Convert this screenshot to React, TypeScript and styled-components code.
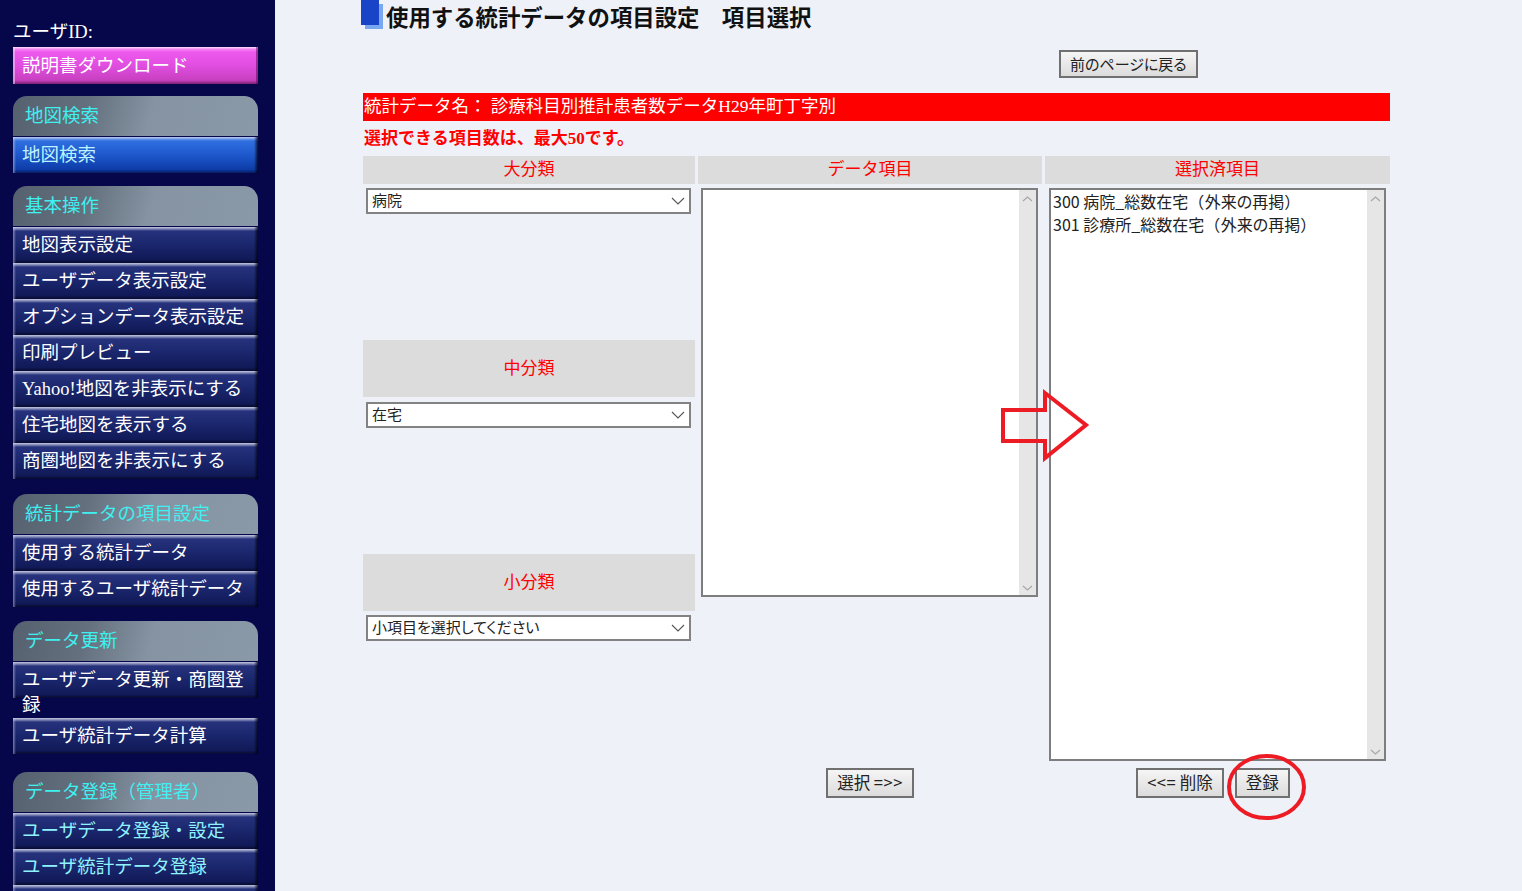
import styled, { createGlobalStyle } from "styled-components";

const GlobalStyle = createGlobalStyle`
  html, body {
    margin: 0;
    padding: 0;
  }
  body {
    background: #eef2f8;
  }
  * {
    box-sizing: border-box;
  }
`;

const Layout = styled.div`
  display: flex;
  height: 100vh;
  overflow: hidden;
`;

/* ---------- sidebar ---------- */

const Sidebar = styled.nav`
  width: 275px;
  flex: none;
  background: #06064a;
  padding: 20px 17px 0 13px;
  font-family: "Liberation Serif", "Noto Sans CJK JP", serif;
  font-size: 18.5px;
  color: #ffffff;
  overflow: hidden;
`;

const UserId = styled.div`
  line-height: 20px;
  height: 20px;
  padding-top: 2px;
`;

const DownloadButton = styled.div`
  margin-top: 7px;
  height: 37px;
  line-height: 39px;
  padding-left: 9px;
  background: linear-gradient(
    to bottom,
    #fde0fd 0,
    #f38af3 2px,
    #ee58ee 5px,
    #e04ee0 50%,
    #c840c0 90%,
    #7a2070 100%
  );
  box-shadow: inset 2px 0 0 rgba(255, 220, 255, 0.5),
    inset -2px 0 0 rgba(90, 0, 80, 0.5);
`;

const Group = styled.div<{ $gap: number }>`
  margin-top: ${(p) => p.$gap}px;
`;

const GroupHeader = styled.div`
  height: 40px;
  line-height: 40px;
  padding-left: 12px;
  margin-bottom: 1px;
  border-radius: 14px 14px 0 0;
  color: #3ff0f0;
  background: linear-gradient(
    105deg,
    #56616f 0%,
    #64707e 30%,
    #8593a2 56%,
    #8a99a8 100%
  );
`;

type Tone = "navy" | "blue";

const itemFills: Record<Tone, string> = {
  navy: "linear-gradient(to bottom, #c4c8e0 0, #7d84b4 2px, #26327c 4px, #1a266c 50%, #111a58 90%, #060a30 100%)",
  blue: "linear-gradient(to bottom, #c0cff0 0, #6f98e8 2px, #2f6fe0 4px, #1e58cc 50%, #0d3ca8 90%, #081c60 100%)",
};

const MenuItem = styled.div<{ $tone: Tone; $color: string }>`
  min-height: 36px;
  padding: 6px 4px 0 9px;
  line-height: 25px;
  color: ${(p) => p.$color};
  background-image: linear-gradient(
      to right,
      rgba(200, 205, 235, 0.55) 0,
      rgba(200, 205, 235, 0) 3px,
      rgba(0, 0, 0, 0) calc(100% - 4px),
      rgba(0, 0, 0, 0.8) 100%
    ),
    ${(p) => itemFills[p.$tone]};
  background-size: 100% 36px;
  background-repeat: no-repeat;
`;

type NavItem = { label: string; tone?: Tone; color?: string };
type NavGroup = { title: string; gap: number; items: NavItem[] };

const navGroups: NavGroup[] = [
  {
    title: "地図検索",
    gap: 12,
    items: [{ label: "地図検索", tone: "blue", color: "#bdf3ff" }],
  },
  {
    title: "基本操作",
    gap: 13,
    items: [
      { label: "地図表示設定" },
      { label: "ユーザデータ表示設定" },
      { label: "オプションデータ表示設定" },
      { label: "印刷プレビュー" },
      { label: "Yahoo!地図を非表示にする" },
      { label: "住宅地図を表示する" },
      { label: "商圏地図を非表示にする" },
    ],
  },
  {
    title: "統計データの項目設定",
    gap: 15,
    items: [{ label: "使用する統計データ" }, { label: "使用するユーザ統計データ" }],
  },
  {
    title: "データ更新",
    gap: 14,
    items: [{ label: "ユーザデータ更新・商圏登録" }, { label: "ユーザ統計データ計算" }],
  },
  {
    title: "データ登録（管理者）",
    gap: 18,
    items: [
      { label: "ユーザデータ登録・設定", color: "#8ff2ff" },
      { label: "ユーザ統計データ登録", color: "#8ff2ff" },
      { label: "オプションデータ登録" },
    ],
  },
];

/* ---------- main ---------- */

const Main = styled.main`
  flex: 1;
  position: relative;
  background: #eef2f8;
  padding-left: 88px;
  font-family: "Noto Sans CJK JP", sans-serif;
  color: #222;
`;

const TitleRow = styled.div`
  display: flex;
  align-items: flex-start;
  height: 34px;
`;

const TitleMark = styled.span`
  width: 18px;
  height: 25px;
  margin-left: -2px;
  margin-right: 7px;
  background: #1a44c8;
  box-shadow: 4px 4px 0 #7aa8f0;
`;

const Title = styled.h1`
  margin: 0;
  font-size: 22.4px;
  line-height: 33px;
  font-weight: bold;
  color: #111;
`;

const BackRow = styled.div`
  margin-top: 16px;
  padding-left: 696px;
  display: flex;
`;

const PlainButton = styled.div<{ $h: number; $fs?: number }>`
  height: ${(p) => p.$h}px;
  line-height: ${(p) => p.$h - 5}px;
  padding: 0 9px;
  border: 2px solid #707070;
  background: linear-gradient(to bottom, #f5f5f5, #dcdcdc);
  font-size: ${(p) => p.$fs ?? 16.5}px;
  font-feature-settings: "palt";
  color: #222;
  white-space: nowrap;
`;

const Wide = styled.span`
  font-feature-settings: normal;
  letter-spacing: 0.5px;
`;

const DataNameBar = styled.div`
  margin-top: 15px;
  width: 1027px;
  height: 28px;
  line-height: 27px;
  padding-left: 1px;
  background: #ff0000;
  color: #ffffff;
  font-family: "Liberation Serif", "Noto Sans CJK JP", serif;
  font-size: 17.5px;
`;

const Notice = styled.div`
  margin-top: 8px;
  line-height: 20px;
  padding-left: 1px;
  color: #ff0000;
  font-weight: bold;
  font-family: "Liberation Serif", "Noto Sans CJK JP", serif;
  font-size: 17px;
`;

const SelectGrid = styled.div`
  margin-top: 7px;
  display: grid;
  grid-template-columns: 332px 344px 345px;
  column-gap: 3px;
  align-items: start;
`;

const HeadCell = styled.div<{ $h?: number }>`
  height: ${(p) => p.$h ?? 28}px;
  line-height: ${(p) => (p.$h ?? 28) - 4}px;
  background: #dcdcdc;
  color: #ff0000;
  font-size: 17px;
  text-align: center;
`;

const Column = styled.div`
  padding-top: 4px;
  display: flex;
  flex-direction: column;
`;

const Spacer = styled.div<{ $h: number }>`
  height: ${(p) => p.$h}px;
`;

const SelectBox = styled.div`
  margin: 0 4px 0 3px;
  height: 26px;
  border: 2px solid #828282;
  background: #ffffff;
  display: flex;
  align-items: center;
  justify-content: space-between;
  padding: 0 4px 3px 4px;
  font-size: 15px;
  font-feature-settings: "palt";
  color: #222;

  svg {
    margin-top: 3px;
  }
`;

const ListBox = styled.div<{ $h: number; $ml: number }>`
  margin-left: ${(p) => p.$ml}px;
  width: 337px;
  height: ${(p) => p.$h}px;
  border: 2px solid #7e7e7e;
  background: #ffffff;
  display: flex;
`;

const ListItems = styled.div`
  flex: 1;
  padding: 0 2px;
  font-size: 16px;
  line-height: 23px;
  font-feature-settings: "palt";
  color: #222;
`;

const ScrollTrack = styled.div`
  width: 17px;
  background: #e6e6e6;
  display: flex;
  flex-direction: column;
  justify-content: space-between;
  align-items: center;
  padding: 6px 0 4px;
`;

const ButtonCell = styled.div<{ $shiftLeft?: number }>`
  padding-top: 7px;
  padding-right: ${(p) => p.$shiftLeft ?? 0}px;
  display: flex;
  justify-content: center;
  gap: 11px;
`;

const Overlay = styled.svg<{ $left: number; $top: number }>`
  position: absolute;
  left: ${(p) => p.$left}px;
  top: ${(p) => p.$top}px;
  pointer-events: none;
`;

const Chevron = ({ up, color, w = 14, h = 8 }: { up?: boolean; color: string; w?: number; h?: number }) => (
  <svg width={w} height={h} viewBox={`0 0 ${w} ${h}`}>
    <polyline
      points={up ? `1,${h - 1} ${w / 2},1 ${w - 1},${h - 1}` : `1,1 ${w / 2},${h - 1} ${w - 1},1`}
      fill="none"
      stroke={color}
      strokeWidth="1.1"
    />
  </svg>
);

const Select = ({ value }: { value: string }) => (
  <SelectBox>
    <span>{value}</span>
    <Chevron color="#555" />
  </SelectBox>
);

const Scrollbar = () => (
  <ScrollTrack>
    <Chevron up color="#a6a6a6" w={11} h={6} />
    <Chevron color="#a6a6a6" w={11} h={6} />
  </ScrollTrack>
);

const selectedItems = [
  { code: "300", name: "病院_総数在宅", note: "外来の再掲" },
  { code: "301", name: "診療所_総数在宅", note: "外来の再掲" },
];

const App = () => {
  return (
    <>
      <GlobalStyle />
      <Layout>
        <Sidebar>
          <UserId>ユーザID:</UserId>
          <DownloadButton>説明書ダウンロード</DownloadButton>
          {navGroups.map((group) => (
            <Group key={group.title} $gap={group.gap}>
              <GroupHeader>{group.title}</GroupHeader>
              {group.items.map((item) => (
                <MenuItem
                  key={item.label}
                  $tone={item.tone ?? "navy"}
                  $color={item.color ?? "#ffffff"}
                >
                  {item.label}
                </MenuItem>
              ))}
            </Group>
          ))}
        </Sidebar>

        <Main>
          <TitleRow>
            <TitleMark />
            <Title>使用する統計データの項目設定　項目選択</Title>
          </TitleRow>
          <BackRow>
            <PlainButton $h={28} $fs={15}>前のページに戻る</PlainButton>
          </BackRow>
          <DataNameBar>統計データ名： 診療科目別推計患者数データH29年町丁字別</DataNameBar>
          <Notice>選択できる項目数は、最大50です。</Notice>

          <SelectGrid>
            <HeadCell>大分類</HeadCell>
            <HeadCell>データ項目</HeadCell>
            <HeadCell>選択済項目</HeadCell>

            <Column>
              <Select value="病院" />
              <Spacer $h={126} />
              <HeadCell $h={57}>中分類</HeadCell>
              <Spacer $h={5} />
              <Select value="在宅" />
              <Spacer $h={126} />
              <HeadCell $h={57}>小分類</HeadCell>
              <Spacer $h={4} />
              <Select value="小項目を選択してください" />
            </Column>

            <Column>
              <ListBox $h={409} $ml={3}>
                <ListItems />
                <Scrollbar />
              </ListBox>
            </Column>

            <Column>
              <ListBox $h={573} $ml={4}>
                <ListItems>
                  {selectedItems.map((item) => (
                    <div key={item.code}>
                      {item.code} {item.name}
                      <Wide>（</Wide>
                      {item.note}
                      <Wide>）</Wide>
                    </div>
                  ))}
                </ListItems>
                <Scrollbar />
              </ListBox>
            </Column>

            <ButtonCell />
            <ButtonCell>
              <PlainButton $h={30}>選択 <Wide>=&gt;&gt;</Wide></PlainButton>
            </ButtonCell>
            <ButtonCell $shiftLeft={9}>
              <PlainButton $h={30}><Wide>&lt;&lt;=</Wide> 削除</PlainButton>
              <PlainButton $h={30}>登録</PlainButton>
            </ButtonCell>
          </SelectGrid>

          {/* annotation marks drawn over the form */}
          <Overlay $left={723} $top={388} width="94" height="75" viewBox="0 0 94 75">
            <polygon
              points="5,22 47,22 47,5 88,37 47,70 47,53 5,53"
              fill="none"
              stroke="#ed1c24"
              strokeWidth="4"
              strokeLinejoin="miter"
            />
          </Overlay>
          <Overlay $left={951} $top={753} width="82" height="68" viewBox="0 0 82 68">
            <ellipse cx="40.5" cy="34" rx="37.5" ry="31" fill="none" stroke="#ed1c24" strokeWidth="4" />
          </Overlay>
        </Main>
      </Layout>
    </>
  );
};

export default App;
